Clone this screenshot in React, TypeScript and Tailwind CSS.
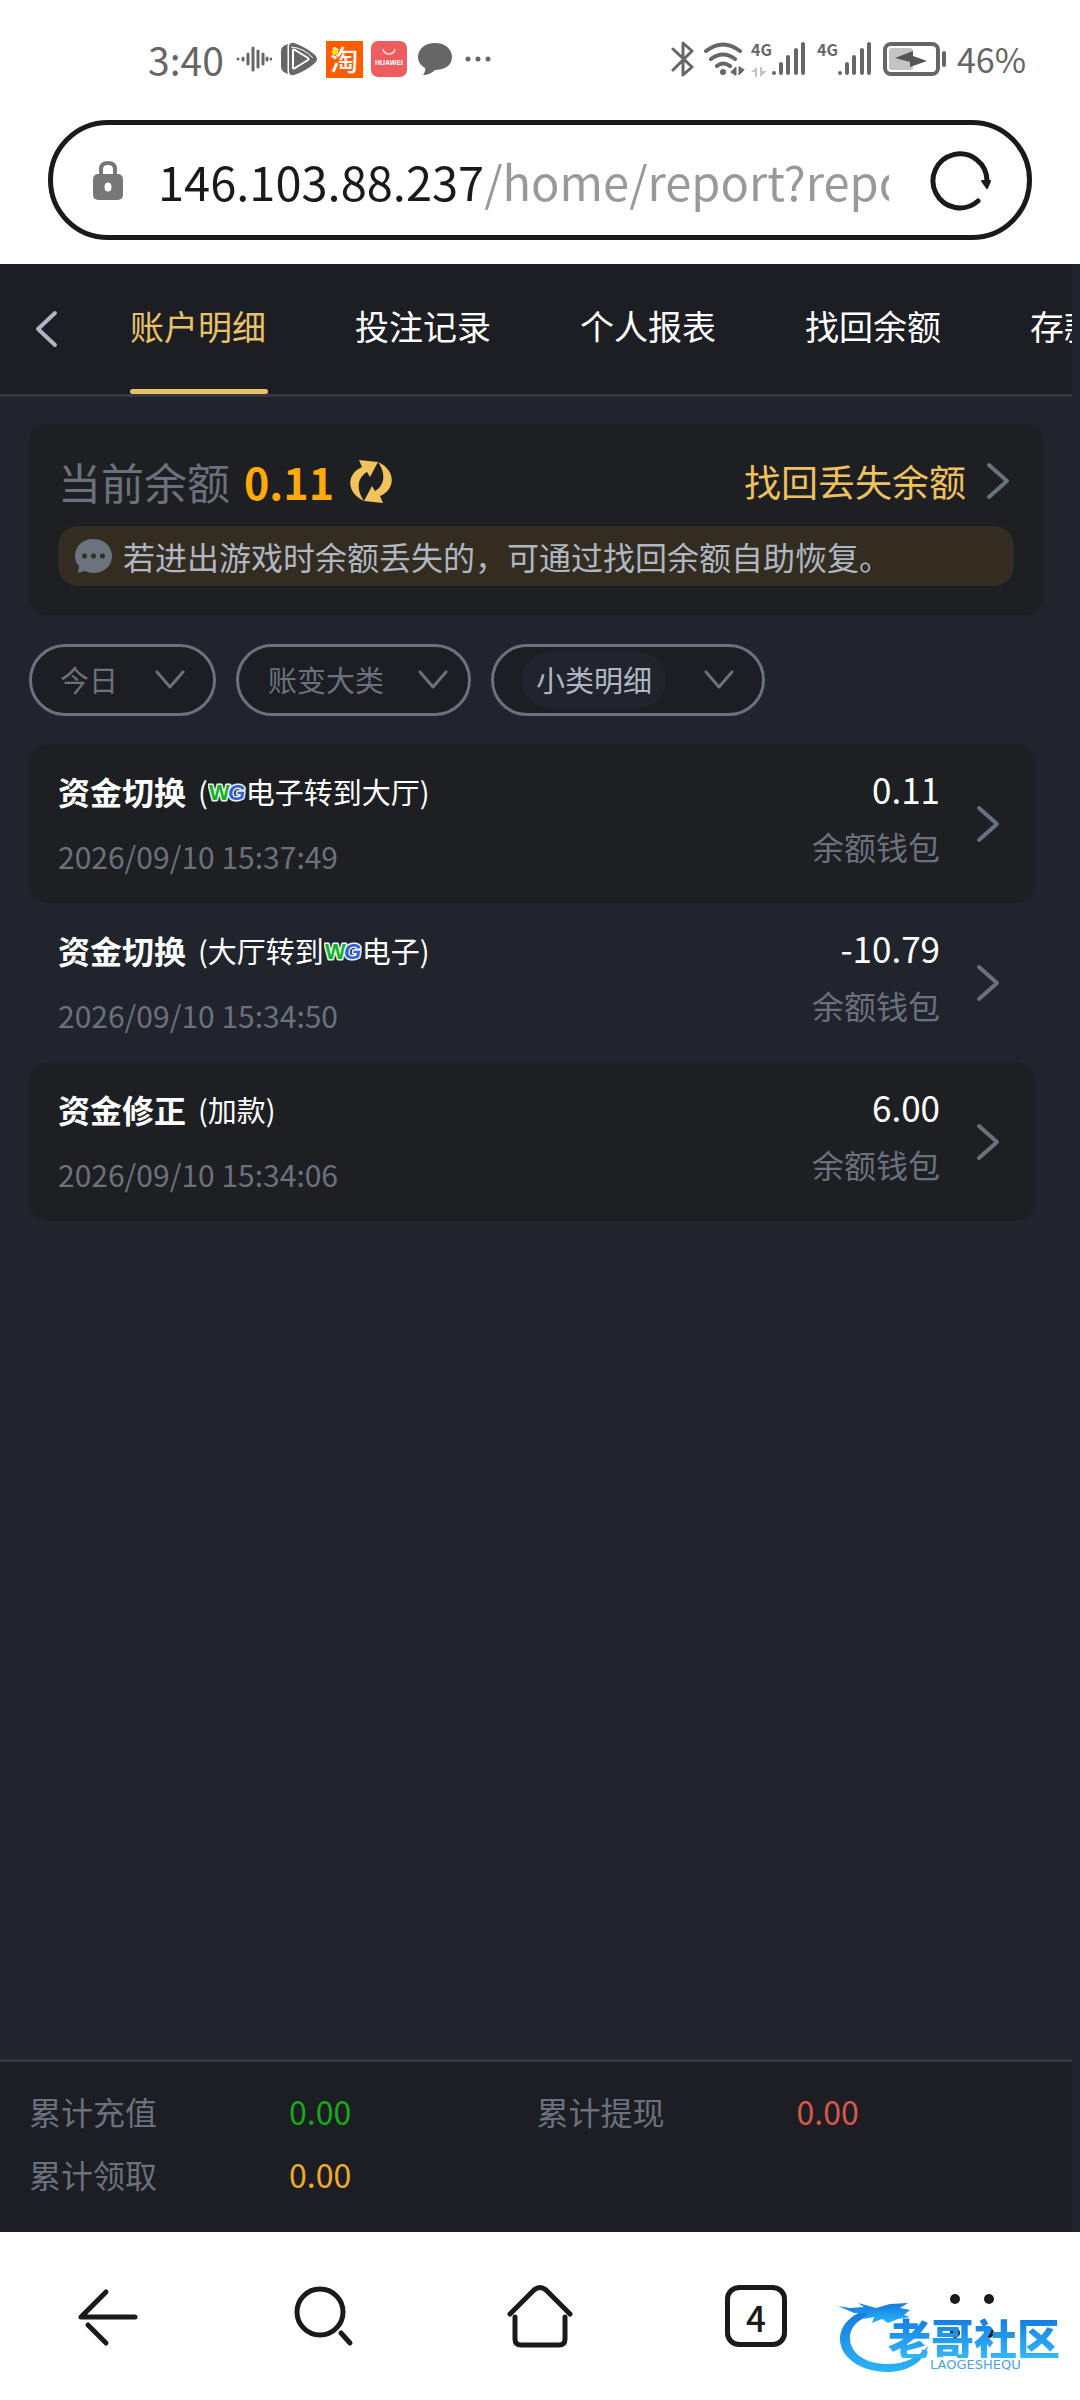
import React from "react";

const tabs = ["账户明细", "投注记录", "个人报表", "找回余额", "存款"];

function WgLogo() {
  return (
    <svg viewBox="0 0 38 24" className="h-6 w-[38px] shrink-0" role="img" aria-label="WG">
      <g
        fontFamily="Liberation Sans, sans-serif"
        fontWeight="700"
        fontSize="22"
        stroke="#eef4ff"
        strokeWidth="3"
        strokeLinejoin="round"
        paintOrder="stroke"
      >
        <text x="1" y="21" fill="#0fb414">W</text>
        <text x="20" y="21" fill="#2f62d6" fontStyle="italic">G</text>
      </g>
    </svg>
  );
}

const records = [
  {
    title: "资金切换",
    note: (
      <>
        <span>(</span>
        <WgLogo />
        <span>电子转到大厅)</span>
      </>
    ),
    time: "2026/09/10 15:37:49",
    amount: "0.11",
  },
  {
    title: "资金切换",
    note: (
      <>
        <span>(大厅转到</span>
        <WgLogo />
        <span>电子)</span>
      </>
    ),
    time: "2026/09/10 15:34:50",
    amount: "-10.79",
  },
  {
    title: "资金修正",
    note: <span>(加款)</span>,
    time: "2026/09/10 15:34:06",
    amount: "6.00",
  },
];

function ChevronRight() {
  return (
    <svg viewBox="0 0 24 38" className="h-[38px] w-6 shrink-0" fill="none" stroke="#6b717d" strokeWidth="4" strokeLinecap="round" strokeLinejoin="round" aria-hidden="true">
      <path d="M3 3 21 19 3 35" />
    </svg>
  );
}

function ChevronDown() {
  return (
    <svg viewBox="0 0 30 20" className="pointer-events-none h-5 w-[30px] shrink-0" fill="none" stroke="#6b717d" strokeWidth="3" strokeLinecap="round" strokeLinejoin="round" aria-hidden="true">
      <path d="M2 2 15 17 28 2" />
    </svg>
  );
}

function Signal() {
  return (
    <svg viewBox="0 0 36 36" className="h-9 w-9" stroke="#666" strokeWidth="4" strokeLinecap="round" aria-hidden="true">
      <path d="M3 32v0M10 32v-9M17 32v-16M25 32v-23M32 32v-29" />
    </svg>
  );
}

function StatusBar() {
  return (
    <header className="flex h-[120px] items-start justify-between bg-white pl-[148px] pr-[54px] pt-[35px] text-[#666]">
      <div className="flex h-12 items-center">
        <span className="text-[39px] leading-12">3:40</span>
        <svg viewBox="0 0 36 26" className="ml-3 h-[26px] w-9" stroke="#666" strokeWidth="3" strokeLinecap="round" aria-hidden="true">
          <path d="M2 13v0M7 12v2M12 8v10M17 2v22M22 5v16M27 8v10M31 12v2M35 13v0" />
        </svg>
        <svg viewBox="0 0 38 34" className="ml-2 h-[34px] w-[38px]" fill="none" aria-hidden="true">
          <path d="M8 2Q1 4 1 9V25Q1 30 8 32Z" fill="#666" />
          <path d="M9 4Q10 0 14 1Q26 5 35 13Q39 17 35 21Q26 29 14 33Q10 34 9 30Z" fill="#666" />
          <path d="M13 8Q13 7 15 8L28 16Q29 17 28 18L15 26Q13 27 13 26Z" stroke="#fff" strokeWidth="2" strokeLinejoin="round" />
          <path d="M8 3V31M11 5Q24 6 33 16" stroke="#fff" strokeWidth="1" />
        </svg>
        <span className="relative ml-2 flex size-[37px] items-center justify-center bg-[#ff5c00] text-[28px] font-medium leading-[37px] text-white">
          淘
          <i className="absolute left-1.5 top-2 size-1.5 rounded-full bg-[#ffe100]" />
        </span>
        <svg viewBox="0 0 36 36" className="ml-2 size-9" role="img" aria-label="HUAWEI">
          <rect width="36" height="36" rx="7" fill="#ee5c60" />
          <path d="M12 8Q13 13 18 13T24 8" fill="none" stroke="#ffd7d7" strokeWidth="1.5" />
          <text x="18" y="24" fontSize="7" fontWeight="700" textAnchor="middle" fill="#fff" fontFamily="Liberation Sans, sans-serif">HUAWEI</text>
        </svg>
        <svg viewBox="0 0 36 34" className="ml-2.5 h-[34px] w-9" fill="#666" aria-hidden="true">
          <path d="M18 1C28 1 35 7 35 15S28 28 18 28Q13 33 6 33Q9 29 8 26C3 23 1 19 1 15 1 7 8 1 18 1Z" />
        </svg>
        <svg viewBox="0 0 26 6" className="ml-3 h-1.5 w-[26px]" fill="#666" aria-hidden="true">
          <circle cx="3" cy="3" r="2.5" />
          <circle cx="13" cy="3" r="2.5" />
          <circle cx="23" cy="3" r="2.5" />
        </svg>
      </div>
      <div className="flex h-12 items-center">
        <svg viewBox="0 0 24 38" className="h-[38px] w-6" fill="none" stroke="#666" strokeWidth="3" strokeLinecap="round" strokeLinejoin="round" aria-hidden="true">
          <path d="M2 9 21 27 12 35V3L21 11 2 30" />
        </svg>
        <svg viewBox="0 0 44 36" className="ml-2 h-9 w-11" fill="none" stroke="#666" strokeWidth="4" strokeLinecap="round" aria-hidden="true">
          <path d="M3 10Q20-3 37 10M8 18Q20 9 32 18M14 25Q20 20 27 25" />
          <circle cx="20" cy="31" r="3" fill="#666" stroke="none" />
          <path d="M28 31 33 26V34ZM36 26V34L41 29Z" fill="#666" strokeWidth="1" />
        </svg>
        <span className="ml-1 flex h-9 w-5 flex-col justify-between">
          <span className="text-[16px] font-bold leading-4">4G</span>
          <svg viewBox="0 0 18 10" className="h-2.5 w-[18px]" fill="#c4c4c4" aria-hidden="true">
            <path d="M0 5 6 0V10H4V5ZM9 0V10L16 4H11V0Z" />
          </svg>
        </span>
        <Signal />
        <span className="ml-2.5 h-9 w-5 text-[16px] font-bold leading-4">4G</span>
        <Signal />
        <svg viewBox="0 0 66 34" className="ml-2.5 h-[34px] w-[66px]" aria-hidden="true">
          <rect x="2" y="2" width="53" height="30" rx="6" fill="none" stroke="#666" strokeWidth="4" />
          <rect x="6" y="6" width="24" height="22" rx="3" fill="#c4c4c4" />
          <path d="M12 16 30 9V14L44 19 27 25V20Z" fill="#555" />
          <path d="M61 11V23" stroke="#666" strokeWidth="4" strokeLinecap="round" />
        </svg>
        <span className="ml-2 text-[34px] leading-12">46%</span>
      </div>
    </header>
  );
}

function AddressBar() {
  return (
    <div className="bg-white px-12 pb-6">
      <form className="flex h-[120px] items-center rounded-full border-5 border-[#1a1a1a] pl-10 pr-[34px]" onSubmit={(e) => e.preventDefault()}>
        <svg viewBox="0 0 30 40" className="h-10 w-[30px] shrink-0" aria-hidden="true">
          <path d="M8 16V9Q8 3 15 3T22 9V16" fill="none" stroke="#777" strokeWidth="4" />
          <rect y="14" width="30" height="26" rx="5" fill="#777" />
          <ellipse cx="15" cy="27" rx="3.5" ry="4.5" fill="#fff" />
        </svg>
        <input
          aria-label="网址"
          defaultValue="146.103.88.237/home/report?repo"
          className="ml-[35px] h-20 min-w-0 flex-1 bg-[linear-gradient(to_right,#1a1a1a_327px,#999_327px)] bg-clip-text text-[47px] text-transparent outline-none"
        />
        <button type="submit" aria-label="刷新" className="ml-10 shrink-0">
          <svg viewBox="0 0 64 64" className="size-16" fill="none" stroke="#1a1a1a" strokeWidth="5" strokeLinecap="round" aria-hidden="true">
            <path d="M49 53A27 27 0 1 1 58 33" />
            <path d="M53 33 61 33 58 40Z" fill="#1a1a1a" strokeWidth="2" strokeLinejoin="round" />
          </svg>
        </button>
      </form>
    </div>
  );
}

function Tabs() {
  return (
    <nav className="flex h-[133px] items-stretch overflow-hidden border-b-3 border-[#343840] bg-[#1d1e23]">
      <button type="button" aria-label="返回" className="w-[130px] shrink-0 pl-[34px]">
        <svg viewBox="0 0 24 38" className="h-[38px] w-6" fill="none" stroke="#adb6c4" strokeWidth="4" strokeLinecap="round" strokeLinejoin="round" aria-hidden="true">
          <path d="M21 3 4 19 21 35" />
        </svg>
      </button>
      <div className="flex gap-[87px]">
        {tabs.map((tab, i) => (
          <a
            key={tab}
            href="#"
            className={
              i === 0
                ? "relative flex w-[138px] shrink-0 items-center pb-1.5 text-[34px] leading-10 text-[#e9c267]"
                : "flex w-[138px] shrink-0 items-center pb-1.5 text-[34px] leading-10 whitespace-nowrap text-white"
            }
          >
            {tab}
            {i === 0 && <span className="absolute inset-x-0 bottom-0 h-[5px] rounded-full bg-[#e9c267]" />}
          </a>
        ))}
      </div>
    </nav>
  );
}

function BalanceCard() {
  return (
    <section className="rounded-2xl bg-[#1e1f23] px-[29px] pt-7 pb-[29px]">
      <div className="flex h-[58px] items-center">
        <span className="text-[43px] leading-[58px] text-[#6b717d]">当前余额</span>
        <strong className="ml-3.5 text-[43px] font-bold leading-[58px] text-[#ffaa09]">0.11</strong>
        <button type="button" aria-label="刷新余额" className="ml-4">
          <svg viewBox="0 0 42 43" className="h-[43px] w-[42px]" fill="#f2c25c" aria-hidden="true">
            <path d="M14 41C-4 33-4 14 12 7L9 0 28 2 20 17 17 12C7 18 6 30 14 41Z" />
            <path d="M28 2C46 10 46 29 30 36L33 43 14 41 22 26 25 31C35 25 36 13 28 2Z" />
          </svg>
        </button>
        <a href="#" className="ml-auto flex items-center gap-5 pr-1 text-[37px] leading-[58px] text-[#efc15e]">
          找回丢失余额
          <ChevronRight />
        </a>
      </div>
      <p className="mt-4 flex h-[60px] items-center rounded-[20px] bg-[#332c21] pl-[17px] text-[32px] leading-[60px] text-[#b0b7c3]">
        <svg viewBox="0 0 37 34" className="mr-[11px] h-[34px] w-[37px] shrink-0" fill="#6b737e" aria-hidden="true">
          <path d="M18 0C29 0 37 7 37 17S29 34 18 34Q13 34 10 32L3 34 4 27Q0 23 0 17C0 7 8 0 18 0Z" />
          <g fill="#332c21">
            <circle cx="9.500" cy="17" r="2.500" />
            <circle cx="18.500" cy="17" r="2.500" />
            <circle cx="27.500" cy="17" r="2.500" />
          </g>
        </svg>
        若进出游戏时余额丢失的，可通过找回余额自助恢复。
      </p>
    </section>
  );
}

function Filters() {
  const select = "appearance-none bg-transparent text-[29px] outline-none";
  const pill = "flex h-[72px] items-center justify-between rounded-full border-3 border-[#6b717d] bg-[#1d1e23]";
  return (
    <div className="mt-[29px] flex gap-5 text-[#6b717d]">
      <div className={`${pill} w-[187px] px-7`}>
        <select aria-label="日期" className={`${select} w-16`}>
          <option>今日</option>
        </select>
        <ChevronDown />
      </div>
      <div className={`${pill} w-[235px] pl-[29px] pr-5`}>
        <select aria-label="账变大类" className={`${select} w-[120px]`}>
          <option>账变大类</option>
        </select>
        <ChevronDown />
      </div>
      <div className={`${pill} w-[274px] px-7`}>
        <select aria-label="小类明细" className="h-14 w-36 appearance-none rounded-full bg-[#21242c] px-3.5 text-[29px] text-[#b0b7c3] outline-none">
          <option>小类明细</option>
        </select>
        <ChevronDown />
      </div>
    </div>
  );
}

function Records() {
  return (
    <ul className="mt-7 mr-2">
      {records.map((r) => (
        <li key={r.time} className="rounded-[20px] odd:bg-[#1e1f23]">
          <a href="#" className="flex h-[159px] items-center pl-[29px] pr-[35px]">
            <div className="flex flex-1 flex-col gap-[15px]">
              <div className="flex h-[50px] items-center text-white">
                <b className="text-[32px] leading-[50px]">{r.title}</b>
                <span className="ml-3 flex items-center text-[29px] leading-[50px]">{r.note}</span>
              </div>
              <time className="text-[30px] leading-[50px] text-[#6b717d]">{r.time}</time>
            </div>
            <div className="mr-9 flex flex-col gap-[7px] pb-[13px] text-right">
              <span className="text-[35px] leading-[50px] text-white">{r.amount}</span>
              <span className="text-[32px] leading-[50px] text-[#6b717d]">余额钱包</span>
            </div>
            <ChevronRight />
          </a>
        </li>
      ))}
    </ul>
  );
}

function Totals() {
  return (
    <dl className="grid grid-cols-2 border-t-3 border-[#343840] bg-[#1d1e23] pl-[29px] pr-7 pt-[18px] pb-[26px] text-[32px] leading-[63px] text-[#6b717d]">
      <div className="flex">
        <dt className="w-65">累计充值</dt>
        <dd className="text-[#17a81a]">0.00</dd>
      </div>
      <div className="flex">
        <dt className="w-65">累计提现</dt>
        <dd className="text-[#d8594b]">0.00</dd>
      </div>
      <div className="flex">
        <dt className="w-65">累计领取</dt>
        <dd className="text-[#eeab2d]">0.00</dd>
      </div>
    </dl>
  );
}

function Watermark() {
  return (
    <div className="pointer-events-none absolute right-5 top-16 h-20 w-[222px]">
      <svg viewBox="0 0 222 80" className="absolute inset-0 h-20 w-[222px]" aria-hidden="true">
        <defs>
          <linearGradient id="ring" x1="0" y1="0" x2="0" y2="1">
            <stop offset="0" stopColor="#1478e0" />
            <stop offset="1" stopColor="#2bb4f5" />
          </linearGradient>
        </defs>
        <g fill="url(#ring)">
          <path d="M40 12C16 14 2 28 2 43 2 62 24 76 49 76 70 76 86 66 90 50 80 62 66 68 50 68 28 68 12 58 12 42 12 30 22 20 42 18Z" />
          <path d="M0 10 12 12 26 11 20 7 38 12 52 8 70 7 62 12 72 14 66 19 72 21 60 23 50 27 44 23 34 27 36 21 26 23 30 17 16 17Z" />
        </g>
      </svg>
      <span className="absolute right-0 top-5 bg-linear-to-b from-[#1478e0] to-[#35b8f7] bg-clip-text text-[43px] font-black leading-[42px] whitespace-nowrap text-transparent">老哥社区</span>
      <span className="absolute left-[92px] top-[63px] font-['DejaVu_Sans'] text-[13px] leading-3 text-[#4aa3e8]">LAOGESHEQU</span>
    </div>
  );
}

function BrowserNav() {
  const stroke = { fill: "none", stroke: "#1a1a1a", strokeWidth: 5, strokeLinecap: "round" as const, strokeLinejoin: "round" as const };
  return (
    <nav className="relative grid h-42 shrink-0 grid-cols-5 place-items-center bg-white text-[#1a1a1a]">
      <button type="button" aria-label="后退">
        <svg viewBox="0 0 64 64" className="size-16" {...stroke}>
          <path d="M59 33H5L30 8M12 41 30 59" />
        </svg>
      </button>
      <button type="button" aria-label="搜索">
        <svg viewBox="0 0 64 64" className="size-16" {...stroke}>
          <circle cx="28" cy="28" r="23" />
          <path d="M49 49 58 59" />
        </svg>
      </button>
      <button type="button" aria-label="主页">
        <svg viewBox="0 0 68 64" className="h-16 w-[68px]" {...stroke}>
          <path d="M4 30 28 6Q34 1 40 6L64 30" />
          <path d="M9 33V55Q9 61 15 61H53Q59 61 59 55V33" />
        </svg>
      </button>
      <button type="button" aria-label="标签页" className="flex size-[62px] items-center justify-center rounded-[14px] border-5 border-[#1a1a1a] text-[35px] font-medium leading-none">
        4
      </button>
      <button type="button" aria-label="菜单">
        <svg viewBox="0 0 64 64" className="size-16" fill="#1a1a1a">
          <circle cx="15" cy="15" r="5" />
          <circle cx="49" cy="15" r="5" />
          <circle cx="15" cy="49" r="5" />
          <circle cx="49" cy="49" r="5" />
        </svg>
      </button>
      <Watermark />
    </nav>
  );
}

export default function App() {
  return (
    <div lang="zh-CN" className="flex min-h-screen flex-col bg-white font-['Noto_Sans_CJK_SC',sans-serif]">
      <StatusBar />
      <AddressBar />
      <div className="flex flex-1 flex-col bg-[#21242c] pr-2">
        <Tabs />
        <main className="flex-1 px-[29px] pt-[27px]">
          <BalanceCard />
          <Filters />
          <Records />
        </main>
        <Totals />
      </div>
      <BrowserNav />
    </div>
  );
}
